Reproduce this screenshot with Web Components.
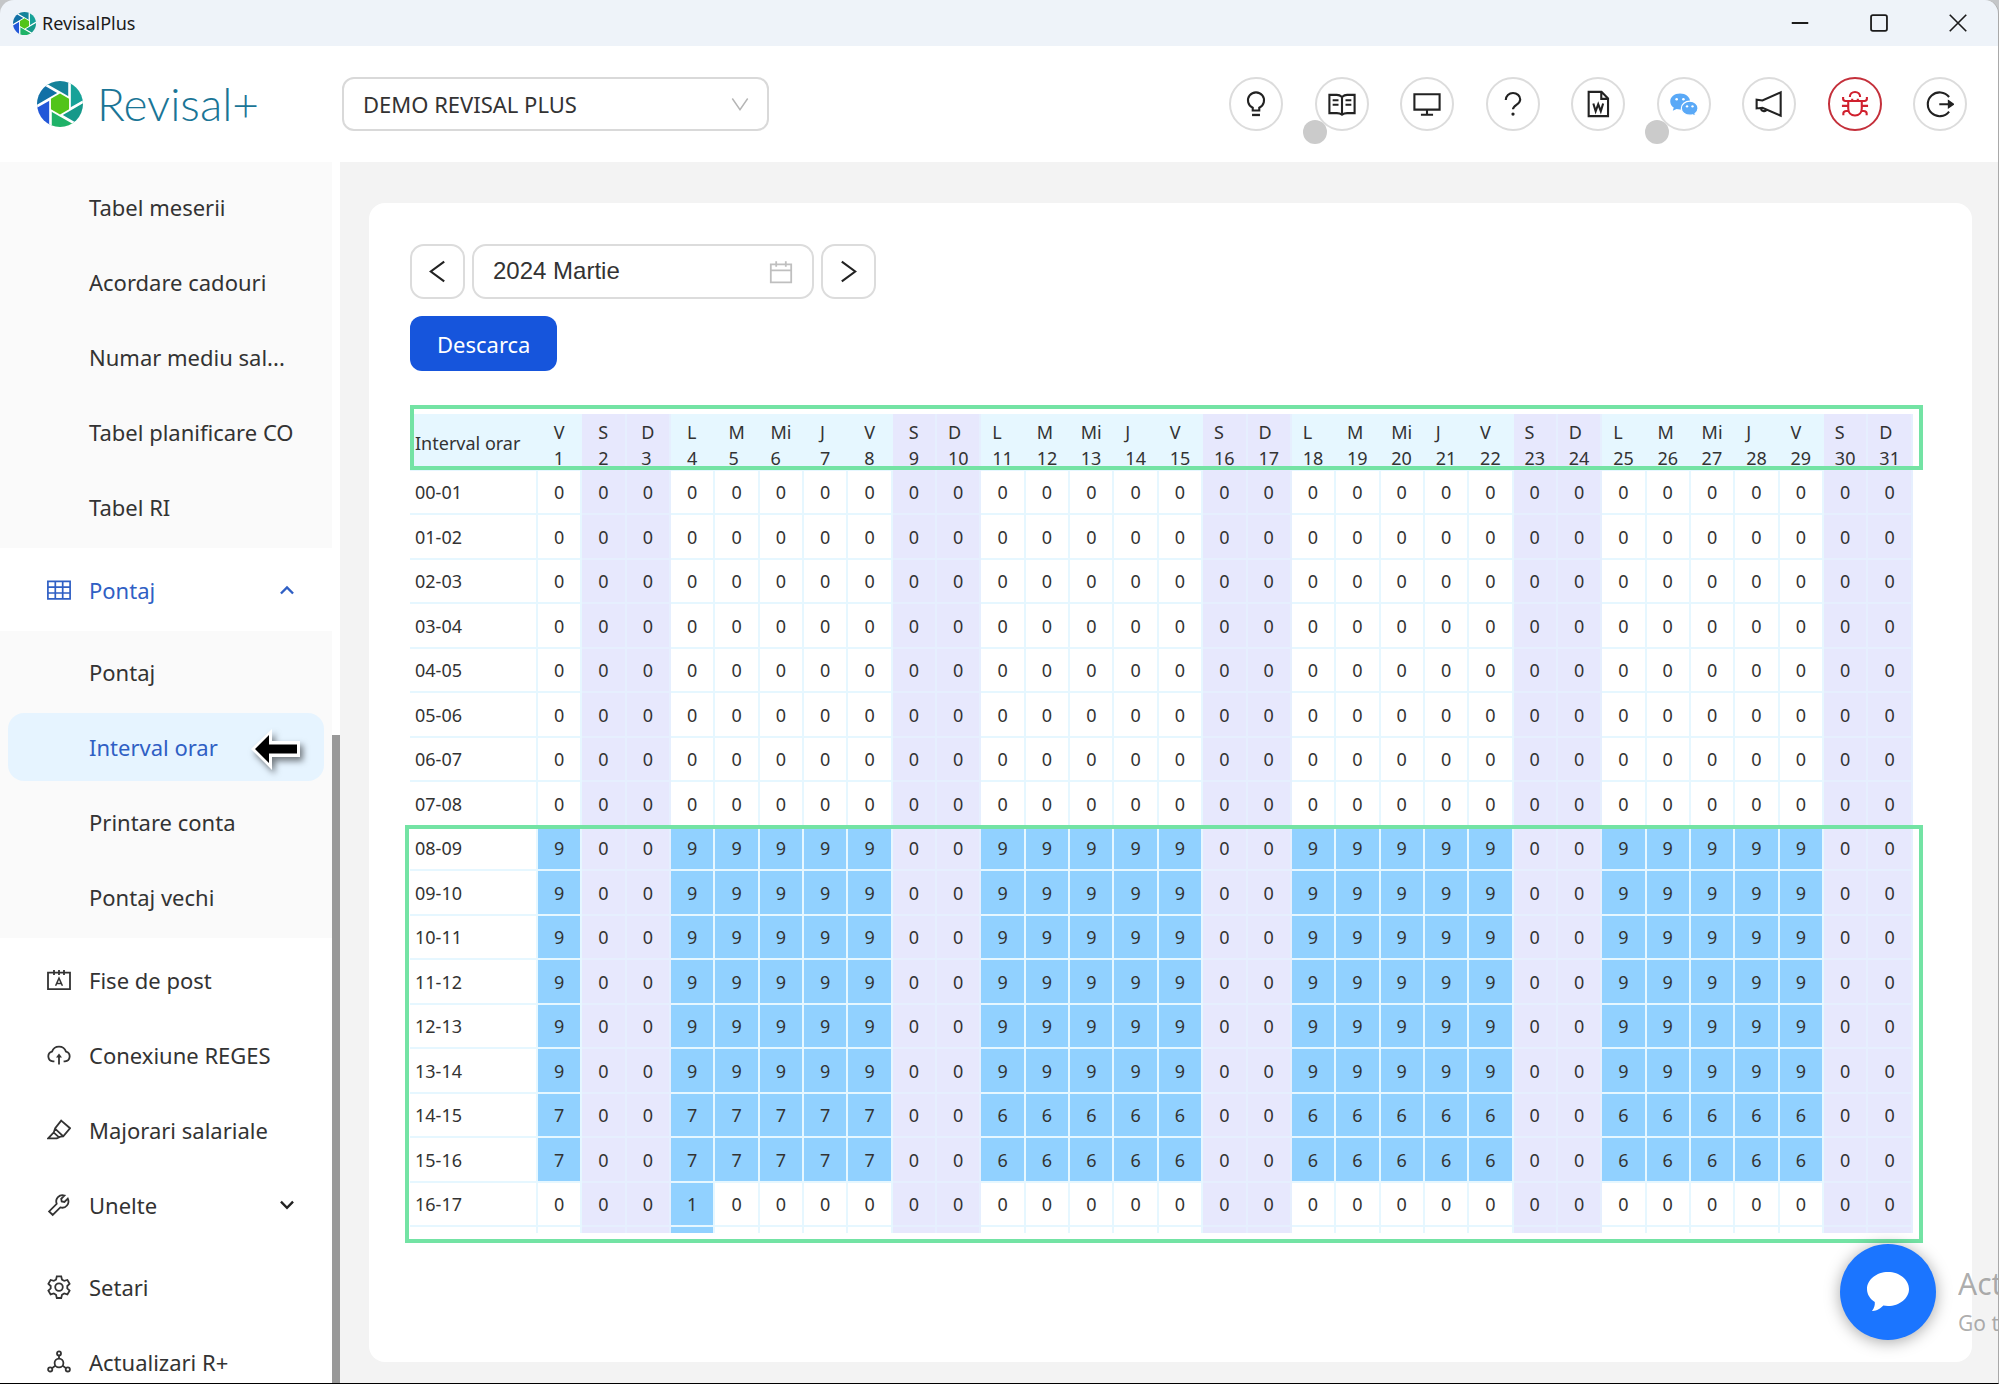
<!DOCTYPE html>
<html lang="ro">
<head>
<meta charset="utf-8">
<title>RevisalPlus</title>
<style>
  html, body { margin: 0; height: 100%; }
  body { background: #c4c6c8; font-family: "Noto Sans", "Open Sans", sans-serif; font-size: 22px; color: #333; overflow: hidden; }
</style>
</head>
<body>
<rp-app></rp-app>
<script>
const ICONS = {
  bulb: '<path d="M9.2 17.6v-2.4A6.9 6.9 0 1 1 14.8 15.2v2.4z"/><path d="M8.6 21.4h6.8" stroke-width="2"/>',
  read: '<path d="M12 6C10.6 4.8 9.4 4.2 7.6 4.2H1.2v15.6h6.4c1.800 0 3 .3 4.400 1.400 1.400-1.100 2.600-1.400 4.400-1.400h6.400V4.200h-6.400C14.600 4.200 13.400 4.800 12 6zM12 6v14.600"/><path d="M4 8.800h5M4 12.600h5M15 8.800h5M15 12.600h5"/>',
  desktop: '<path d="M1.200 3.600h21.600v13.200H1.200zM12 16.800v4.200M6.800 21.200h10.400"/>',
  question: '<path d="M5.800 8.600c0-3.600 2.800-6 6.200-6s6.200 2.400 6.200 5.600c0 4.400-6.200 4.600-6.200 8.400"/><circle cx="12" cy="20.600" r="1.400" fill="currentColor" stroke="none"/>',
  word: '<path d="M4 1.600h11l5.600 5.600v15.200H4zM14.800 1.800v5.800h5.600"/><path d="M8 11.600l2 6.600 2.200-6 2.200 6 2-6.600"/>',
  wechat: '<g stroke="none"><path fill="#5aa9f7" d="M8.600 3C3.800 3 .2 6 .2 9.800c0 2.200 1.200 4 3 5.300l-.8 2.700 3.200-1.500c1 .3 2 .4 3 .4 4.800 0 8.600-3 8.600-6.900S13.400 3 8.600 3z"/><circle cx="5.700" cy="7.900" r="1.100" fill="#fff"/><circle cx="11.500" cy="7.900" r="1.100" fill="#fff"/><path stroke="#fff" stroke-width="1" fill="#5aa9f7" d="M17 9.600c-4 0-7.300 2.600-7.300 6s3.300 6 7.300 6c.9 0 1.700-.1 2.500-.3l2.500 1.200-.6-2.200c1.600-1.100 2.600-2.800 2.600-4.700 0-3.400-3-6-7-6z"/><circle cx="14.600" cy="14" r="1" fill="#fff"/><circle cx="19.300" cy="14" r="1" fill="#fff"/></g>',
  sound: '<path d="M1.400 8.400v7.400l5-.6L22 22V2L6.400 9zM5.200 15.400a2.600 2.600 0 0 0 4.800 1.500"/>',
  bug: '<path d="M6.200 9.400h11.600v6.400c0 3.700-2.400 6-5.800 6s-5.800-2.300-5.800-6zM7.600 6c0-2.600 2-4.300 4.400-4.300S16.400 3.400 16.400 6M.8 13.600h5.400M17.800 13.600h5.400M1.800 6v1.600c0 1.200.8 1.800 2 1.800h16.400c1.200 0 2-.6 2-1.800V6M2 21.600v-1.400c0-1.400 1.200-2.200 2.600-2.200h2M22 21.600v-1.400c0-1.400-1.200-2.200-2.600-2.200h-2M9.600 9.400v-2M14.400 9.400v-2"/>',
  logout: '<path d="M19.800 6A10.200 10.200 0 1 0 19.800 18.500"/><path d="M11.400 12.200h9"/><path d="M19.600 9.800l3.400 2.400-3.400 2.400z" fill="currentColor"/>',
  table: '<path d="M.9 3.400h22.200v17.400H.9zM.9 9.200h22.200M.9 15h22.200M8.300 3.400v17.400M15.700 3.400v17.400" stroke-width="1.700"/>',
  card: '<path d="M1 4.600h22v16.600H1z"/><path d="M7 2v5M12 2v5M17 2v5"/><path d="M8.600 17.800l3.400-7.600 3.400 7.600M9.800 15.400h4.400" stroke-width="1.500"/>',
  cloud: '<path d="M7.400 18.400H6A5 5 0 0 1 5 8.600a7.400 7.400 0 0 1 14 0 5 5 0 0 1-1 9.800h-1.400"/><path d="M12 21.600v-8.600"/><path d="M9 14.600l3-4 3 4z" fill="currentColor" stroke="none"/>',
  highlight: '<path d="M14.200 2.600l8.800 7.600-6.800 8.200-2.800.2L9.800 20.400H1.200l5.600-6 1.400-4.200zM8 10.600l7.800 7.200M6.800 14.600l5.600 5"/>',
  tool: '<path d="M20.800 5.600l-3.400 3.400-2.700-.5-.5-2.700 3.300-3.300a6.300 6.300 0 0 0-7.800 8.300l-7.600 7.600 3.600 3.600 7.600-7.600A6.300 6.300 0 0 0 20.800 5.600z"/>',
  setting: '<path d="M9.800 1.400h4.400l.8 3.200 2.200 1.300 3.200-.9 2.200 3.800-2.300 2.200v2.400l2.300 2.200-2.200 3.800-3.200-.9-2.200 1.300-.8 3.200H9.800L9 19.800l-2.200-1.300-3.200.9-2.200-3.800 2.300-2.200v-2.400L1.400 8.800 3.600 5l3.200.9L9 4.600z"/><circle cx="12" cy="12.100" r="3.800"/>',
  deploy: '<circle cx="12" cy="13" r="4.400"/><circle cx="12" cy="3.400" r="2"/><circle cx="3.200" cy="19.400" r="2.100"/><circle cx="20.800" cy="19.400" r="2.100"/><path d="M12 5.400v3.200M8.400 15.600l-3.400 2.600M15.600 15.600l3.400 2.600"/>',
  up: '<path d="M5.400 15.800L12 9.200l6.600 6.600" stroke-width="2.600"/>',
  down: '<path d="M5.400 8.400L12 15l6.600-6.600" stroke-width="2.600"/>',
  angle: '<path d="M3.600 6L12 18.200 20.400 6" stroke-width="1.600"/>',
  prev: '<path d="M19 1.600L5 12l14 10.400" stroke-width="2.200"/>',
  next: '<path d="M5 1.600L19 12 5 22.400" stroke-width="2.200"/>',
  calendar: '<path d="M1.800 4.400h20.400v18H1.800zM1.800 10.400h20.400M7.200 1.200v5.600M16.800 1.200v5.600"/>',
  min: '<path d="M1 12h22" stroke-width="2.400"/>',
  max: '<rect x="1.400" y="1.400" width="21.200" height="21.200" rx="2.500" stroke-width="2.400"/>',
  close: '<path d="M1 1l22 22M23 1L1 23" stroke-width="2.200"/>'
};

class RpElement extends HTMLElement {
  connectedCallback() {
    if (this.shadowRoot) return;
    this.attachShadow({ mode: 'open' }).innerHTML = this.render();
  }
}

class RpIcon extends RpElement {
  render() {
    return `<style>
      :host { display: inline-block; width: 24px; height: 24px; }
      svg { display: block; width: 100%; height: 100%; }
    </style>
    <svg viewBox="0 0 24 24" fill="none" stroke="currentColor" stroke-width="1.800" aria-hidden="true">${ICONS[this.getAttribute('name')]}</svg>`;
  }
}
customElements.define('rp-icon', RpIcon);

/* Shutter logo: six blades turning around a hexagon. */
class RpLogo extends RpElement {
  render() {
    const v = [];
    for (let i = 0; i < 6; i++) {
      const a = (i * 60 - 90) * Math.PI / 180;
      v.push([11 * Math.cos(a), 11 * Math.sin(a)]);
    }
    const tip = i => {
      const p = v[i % 6], q = v[(i + 1) % 6];
      return [p[0] + (p[0] - q[0]) * 2.4, p[1] + (p[1] - q[1]) * 2.4];
    };
    const colors = ['#15839a', '#17a298', '#16998a', '#1fb268', '#2257d8', '#1170a6'];
    let blades = '', rays = '';
    for (let i = 0; i < 6; i++) {
      const a = v[i], b = tip(i), c = tip(i + 1), d = v[(i + 1) % 6];
      const far = [(b[0] + c[0]) * 1.2, (b[1] + c[1]) * 1.2];
      blades += `<polygon fill="${colors[i]}" points="${[a, b, far, c, d].map(p => p.join()).join(' ')}"/>`;
      rays += `<path d="M${d}L${a}L${b}"/>`;
    }
    return `<style>
      :host { display: block; width: 46px; height: 46px; }
      svg { display: block; width: 100%; height: 100%; }
    </style>
    <svg viewBox="-23 -23 46 46" aria-hidden="true">
      <defs><clipPath id="c"><circle r="23"/></clipPath></defs>
      <g clip-path="url(#c)">${blades}<g stroke="#fff" stroke-width="2.600" fill="none">${rays}</g></g>
      <polygon fill="#52c41a" points="${v.map(p => p.map(n => n * .95).join()).join(' ')}"/>
    </svg>`;
  }
}
customElements.define('rp-logo', RpLogo);

class RpTitlebar extends RpElement {
  render() {
    return `<style>
      :host { display: flex; align-items: center; justify-content: space-between; height: 46px; background: #eef3f9; color: #1b1b1b; }
      .name { display: flex; align-items: center; gap: 6px; padding-left: 13px; font-size: 18px; line-height: 24px; }
      rp-logo { width: 23px; height: 23px; }
      .controls { display: flex; gap: 61px; padding-right: 31px; }
      button { all: unset; display: block; height: 18px; width: 18px; }
      rp-icon { display: block; width: 18px; height: 18px; }
    </style>
    <div class="name"><rp-logo></rp-logo><span>RevisalPlus</span></div>
    <div class="controls">
      <button aria-label="Minimizare"><rp-icon name="min"></rp-icon></button>
      <button aria-label="Maximizare"><rp-icon name="max"></rp-icon></button>
      <button aria-label="Inchidere"><rp-icon name="close"></rp-icon></button>
    </div>`;
  }
}
customElements.define('rp-titlebar', RpTitlebar);

class RpRoundButton extends RpElement {
  render() {
    const red = this.hasAttribute('danger'), dot = this.hasAttribute('dot');
    return `<style>
      :host { display: block; position: relative; }
      button { display: flex; align-items: center; justify-content: center; box-sizing: border-box; width: 54px; height: 54px; padding: 0;
        border: 2px solid ${red ? '#c4303b' : '#dcdcdc'}; border-radius: 50%; background: #fff; color: ${red ? '#d0202e' : '#222'}; }
      rp-icon { width: 28px; height: 28px; }
      .dot { position: absolute; left: -12px; top: 43px; width: 24px; height: 24px; border-radius: 50%; background: #cbcbcb; }
    </style>
    <button aria-label="${this.getAttribute('label')}"><rp-icon name="${this.getAttribute('icon')}"></rp-icon></button>
    ${dot ? '<span class="dot"></span>' : ''}`;
  }
}
customElements.define('rp-round-button', RpRoundButton);

class RpHeader extends RpElement {
  render() {
    return `<style>
      :host { display: flex; align-items: center; height: 116px; background: #fff; box-sizing: border-box; padding: 0 31px 0 37px; }
      .brand { display: flex; align-items: center; gap: 14px; width: 305px; color: #1a7596; font-family: Lato, sans-serif; font-weight: 300; font-size: 46px; line-height: 54px; }
      .company { position: relative; flex: 0 0 427px; }
      select { appearance: none; display: block; width: 100%; height: 54px; box-sizing: border-box; padding: 0 48px 0 19px;
        border: 2px solid #d9d9d9; border-radius: 12px; background: #fff; color: #333; font: 22px/30px "Noto Sans", sans-serif; }
      .company rp-icon { position: absolute; right: 18px; top: 16px; width: 22px; height: 22px; color: #b5b5b5; pointer-events: none; }
      nav { display: flex; justify-content: space-between; width: 738px; margin-left: auto; }
    </style>
    <div class="brand"><rp-logo></rp-logo><span>Revisal+</span></div>
    <div class="company">
      <select aria-label="Companie"><option>DEMO REVISAL PLUS</option></select>
      <rp-icon name="angle"></rp-icon>
    </div>
    <nav>
      <rp-round-button icon="bulb" label="Sugestii"></rp-round-button>
      <rp-round-button icon="read" label="Manual" dot></rp-round-button>
      <rp-round-button icon="desktop" label="Ecran"></rp-round-button>
      <rp-round-button icon="question" label="Ajutor"></rp-round-button>
      <rp-round-button icon="word" label="Documente"></rp-round-button>
      <rp-round-button icon="wechat" label="Mesaje" dot></rp-round-button>
      <rp-round-button icon="sound" label="Noutati"></rp-round-button>
      <rp-round-button icon="bug" label="Raporteaza o problema" danger></rp-round-button>
      <rp-round-button icon="logout" label="Iesire"></rp-round-button>
    </nav>`;
  }
}
customElements.define('rp-header', RpHeader);

class RpMenuItem extends RpElement {
  render() {
    const icon = this.getAttribute('icon'), arrow = this.getAttribute('arrow');
    const color = this.hasAttribute('open') || this.hasAttribute('selected') ? '#2f5fc4' : 'inherit';
    return `<style>
      :host { display: block; position: relative; flex: none; margin: 0 8px; }
      a { display: flex; align-items: center; height: 68px; box-sizing: border-box; padding: 0 30px 0 39px; border-radius: 16px;
        color: ${color}; background: ${this.hasAttribute('selected') ? '#e6f4ff' : 'transparent'}; text-decoration: none; white-space: nowrap; line-height: 30px; }
      .icon { flex: none; width: 24px; height: 24px; margin-right: 18px; }
      .arrow { margin-left: auto; width: 22px; height: 22px; margin-right: -4px; ${arrow === 'down' ? 'color: #222;' : ''} }
    </style>
    <a href="#"><span class="icon">${icon ? `<rp-icon name="${icon}"></rp-icon>` : ''}</span><slot></slot>
    ${arrow ? `<rp-icon class="arrow" name="${arrow}"></rp-icon>` : ''}</a><slot name="pointer"></slot>`;
  }
}
customElements.define('rp-menu-item', RpMenuItem);

class RpPointer extends RpElement {
  render() {
    return `<style>
      :host { position: absolute; left: 238px; top: 12px; width: 62px; height: 52px; }
      svg { display: block; overflow: visible; filter: drop-shadow(3px 4px 3px rgba(0,0,0,.5)); }
    </style>
    <svg width="62" height="52" viewBox="0 0 62 52" aria-hidden="true">
      <path d="M5 24L26 4V16H54V32H26V45Z" fill="#fff"/><path d="M9 24L23 10V19.500H51V28.500H23V38Z" fill="#000"/>
    </svg>`;
  }
}
customElements.define('rp-pointer', RpPointer);

class RpSidebar extends RpElement {
  render() {
    return `<style>
      :host { display: flex; background: #fff; overflow: hidden; min-height: 0; }
      nav { flex: 1; min-width: 0; display: flex; flex-direction: column; overflow: hidden; }
      .group { flex: none; display: flex; flex-direction: column; gap: 7px; padding: 7px 0; }
      .sub { background: #fafafa; }
      .first { padding-top: 11px; }
      .title, .rest { padding-top: 8px; }
      .last { margin-top: 7px; padding: 0; }
      .rail { flex: none; width: 8px; display: flex; }
      .thumb { flex: 1; margin-top: 573px; background: #999; }
    </style>
    <nav>
      <div class="group sub first">
        <rp-menu-item>Tabel meserii</rp-menu-item>
        <rp-menu-item>Acordare cadouri</rp-menu-item>
        <rp-menu-item>Numar mediu sal...</rp-menu-item>
        <rp-menu-item>Tabel planificare CO</rp-menu-item>
        <rp-menu-item>Tabel RI</rp-menu-item>
      </div>
      <div class="group title"><rp-menu-item icon="table" arrow="up" open>Pontaj</rp-menu-item></div>
      <div class="group sub">
        <rp-menu-item>Pontaj</rp-menu-item>
        <rp-menu-item selected>Interval orar<rp-pointer slot="pointer"></rp-pointer></rp-menu-item>
        <rp-menu-item>Printare conta</rp-menu-item>
        <rp-menu-item>Pontaj vechi</rp-menu-item>
      </div>
      <div class="group rest">
        <rp-menu-item icon="card">Fise de post</rp-menu-item>
        <rp-menu-item icon="cloud">Conexiune REGES</rp-menu-item>
        <rp-menu-item icon="highlight">Majorari salariale</rp-menu-item>
        <rp-menu-item icon="tool" arrow="down">Unelte</rp-menu-item>
      </div>
      <div class="group last">
        <rp-menu-item icon="setting">Setari</rp-menu-item>
        <rp-menu-item icon="deploy">Actualizari R+</rp-menu-item>
      </div>
    </nav>
    <div class="rail"><div class="thumb"></div></div>`;
  }
}
customElements.define('rp-sidebar', RpSidebar);

class RpMonthPicker extends RpElement {
  render() {
    return `<style>
      :host { display: flex; gap: 7px; }
      button, input { box-sizing: border-box; height: 55px; border: 2px solid #dcdcdc; border-radius: 14px; background: #fff; color: #222; }
      button { display: flex; align-items: center; justify-content: center; width: 55px; padding: 0; }
      button rp-icon { width: 23px; height: 23px; }
      .field { position: relative; width: 342px; }
      input { width: 100%; padding: 0 50px 2px 19px; color: #333; font: 24px "Liberation Sans", Arial, sans-serif; }
      .field rp-icon { position: absolute; right: 21px; top: 16px; color: #bfbfbf; }
    </style>
    <button aria-label="Luna anterioara"><rp-icon name="prev"></rp-icon></button>
    <div class="field"><input aria-label="Luna" value="2024 Martie"><rp-icon name="calendar"></rp-icon></div>
    <button aria-label="Luna urmatoare"><rp-icon name="next"></rp-icon></button>`;
  }
}
customElements.define('rp-month-picker', RpMonthPicker);

class RpHoursTable extends RpElement {
  render() {
    const names = ['L', 'M', 'Mi', 'J', 'V', 'S', 'D'];
    const days = Array.from({ length: 31 }, (_, i) => ({ n: i + 1, w: (i + 4) % 7 }));
    const pad = n => String(n).padStart(2, '0');
    const hours = (h, d) => {
      if (d.w > 4) return 0;
      if (h >= 8 && h < 14) return 9;
      if (h === 14 || h === 15) return d.n < 9 ? 7 : 6;
      return h >= 16 && d.n === 4 ? 1 : 0;
    };
    const cls = (d, v) => v ? 'on' : d.w > 4 ? 'off' : '';
    const head = days.map(d => `<th scope="col" class="${cls(d, 0)}"><span>${names[d.w]}<br>${d.n}</span></th>`).join('');
    let rows = '';
    for (let h = 0; h < 17; h++)
      rows += `<tr><th scope="row">${pad(h)}-${pad(h + 1)}</th>${days.map(d => { const v = hours(h, d); return `<td class="${cls(d, v)}">${v}</td>`; }).join('')}</tr>`;
    /* The row after the last one shows only its top edge. */
    const edge = `<tr><th></th>${days.map(d => `<td class="${cls(d, hours(17, d))}"></td>`).join('')}</tr>`;
    return `<style>
      :host { display: block; position: relative; }
      .view { height: 819px; overflow: hidden; }
      table { width: 100%; table-layout: fixed; border-collapse: separate; border-spacing: 0; font-size: 18px; line-height: 26px; color: #333; }
      th, td { padding: 0; font-weight: 400; text-align: center; box-sizing: border-box; border-right: 2px solid #e6f7ff; border-bottom: 2px solid #e6f7ff; }
      th:first-child { width: 128px; text-align: left; padding-left: 5px; }
      thead th { height: 57px; background: #e6f7ff; border-bottom: 0; vertical-align: bottom; }
      thead th:first-child { vertical-align: middle; }
      thead span { display: inline-block; text-align: left; vertical-align: bottom; }
      tbody tr { height: 44px; }
      tbody tr:nth-child(even) { height: 45px; }
      .off { background: #e7e8fd; border-color: #e6effe; }
      thead .off { border-color: #e6effe; }
      .on { background: #91d1ff; }
      .mark { position: absolute; right: -10px; box-sizing: border-box; border: 4px solid #73e3a4; pointer-events: none; }
      .days { left: 0; top: -9px; height: 65px; }
      .work { left: -5px; top: 411px; height: 418px; }
    </style>
    <div class="view"><table>
      <thead><tr><th scope="col">Interval orar</th>${head}</tr></thead>
      <tbody>${rows}${edge}</tbody>
    </table></div>
    <div class="mark days"></div><div class="mark work"></div>`;
  }
}
customElements.define('rp-hours-table', RpHoursTable);

class RpChat extends RpElement {
  render() {
    return `<style>
      :host { position: absolute; right: 62px; bottom: 43px; }
      button { display: flex; align-items: center; justify-content: center; width: 96px; height: 96px; border: 0; padding: 0; border-radius: 50%;
        background: #1b75ff; box-shadow: 0 2px 16px rgba(0,0,0,.35); }
    </style>
    <button aria-label="Chat"><svg width="44" height="42" viewBox="0 0 44 42"><path fill="#fff" d="M22 1C10.500 1 1 8.600 1 18c0 5.300 3 10 7.800 13.100C9 34.500 8.300 37 6 40c4.500.3 8.500-2.500 11.300-5.400 1.500.3 3.100.4 4.700.4 11.600 0 21-7.600 21-17S33.600 1 22 1z"/></svg></button>`;
  }
}
customElements.define('rp-chat', RpChat);

/* System activation notice, cut off by the edge of the window. */
class RpWatermark extends RpElement {
  render() {
    return `<style>
      :host { position: absolute; right: 0; bottom: 42px; width: 40px; overflow: hidden; white-space: nowrap; color: rgba(120,120,120,.6); pointer-events: none; }
      div { font-size: 30px; line-height: 42px; }
      div + div { font-size: 21px; line-height: 36px; }
    </style><div>Act</div><div>Go t</div>`;
  }
}
customElements.define('rp-watermark', RpWatermark);

class RpPage extends RpElement {
  render() {
    return `<style>
      :host { display: flex; background: #f3f3f3; padding: 41px 26px 21px 29px; box-sizing: border-box; min-width: 0; min-height: 0; }
      section { flex: 1; min-width: 0; display: flex; flex-direction: column; align-items: flex-start; background: #fff; border-radius: 16px; padding: 41px 59px 41px 41px; }
      .download { height: 55px; margin: 17px 0 43px; padding: 0 27px; border: 0; border-radius: 12px; background: #1655dc; color: #fff; font: 22px/30px "Noto Sans", sans-serif; }
      rp-hours-table { align-self: stretch; }
    </style>
    <section>
      <rp-month-picker></rp-month-picker>
      <button class="download">Descarca</button>
      <rp-hours-table></rp-hours-table>
    </section>`;
  }
}
customElements.define('rp-page', RpPage);

class RpApp extends RpElement {
  render() {
    return `<style>
      :host { position: relative; display: grid; grid-template: auto auto minmax(0, 1fr) / 340px minmax(0, 1fr); height: 100vh; box-sizing: border-box;
        border-right: 1px solid #a9a9a9; border-bottom: 1px solid #000; border-radius: 14px 14px 0 0; overflow: hidden; }
      rp-titlebar, rp-header { grid-column: 1 / -1; }
    </style>
    <rp-titlebar></rp-titlebar>
    <rp-header></rp-header>
    <rp-sidebar></rp-sidebar>
    <rp-page></rp-page>
    <rp-chat></rp-chat>
    <rp-watermark></rp-watermark>`;
  }
}
customElements.define('rp-app', RpApp);
</script>
</body>
</html>
